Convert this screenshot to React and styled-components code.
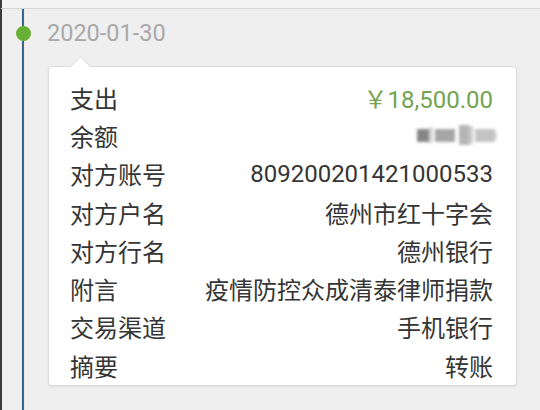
import React from "react";
import styled, { createGlobalStyle } from "styled-components";

const Global = createGlobalStyle`
  html, body { margin: 0; padding: 0; background: #efefef; }
  body { font-family: "Roboto", "Noto Sans CJK SC", sans-serif; }
`;

const Page = styled.div`
  width: 540px;
  height: 410px;
  display: flex;
  flex-direction: column;
  background: #efefef;
  overflow: hidden;
`;

const TopBand = styled.div`
  height: 8px;
  background: #f3f3f3;
  border-bottom: 1px solid #d6d6d6;
  border-left: 2px solid #3b3b3b;
`;

const Main = styled.div`
  flex: 1;
  display: flex;
`;

const Edge = styled.div`
  width: 2px;
  background: #3b3b3b;
`;

const Rail = styled.div`
  position: relative;
  width: 45px;
  display: flex;
`;

const Line = styled.div`
  width: 2px;
  margin-left: 20px;
  background: #3d6687;
  box-shadow: 0 0 1px #8fb0c8;
`;

const Dot = styled.div`
  position: absolute;
  left: 13.5px;
  top: 16.5px;
  width: 15px;
  height: 15px;
  border-radius: 50%;
  background: #66b133;
`;

const Content = styled.div`
  flex: 1;
  display: flex;
  flex-direction: column;
  padding-top: 7px;
`;

const DateText = styled.div`
  height: 34px;
  line-height: 34px;
  font-size: 23.5px;
  color: #a9a9a9;
  font-family: "Roboto", sans-serif;
`;

const Card = styled.div`
  position: relative;
  margin: 16px 23px 0 1px;
  background: #fff;
  border: 1px solid #dcdcdc;
  border-radius: 4px;
  box-shadow: 0 1px 2px rgba(0, 0, 0, 0.08);
  padding: 11px 23px 1px 21px;
  display: flex;
  flex-direction: column;

  &::before {
    content: "";
    position: absolute;
    left: 24px;
    top: -8px;
    width: 14px;
    height: 14px;
    background: #fff;
    border-left: 1px solid #dcdcdc;
    border-top: 1px solid #dcdcdc;
    transform: rotate(45deg);
  }
`;

const Row = styled.div`
  height: 38.3px;
  display: flex;
  align-items: center;
  justify-content: space-between;
  font-size: 24px;
  color: #353535;
  position: relative;
`;

const Label = styled.span`
  font-family: "Noto Sans CJK SC", sans-serif;
`;

const Value = styled.span`
  color: ${(p) => p.$color || "#353535"};
  font-family: "Roboto", "Noto Sans CJK SC", sans-serif;
`;

const Yen = styled.span`
  font-family: "Noto Sans CJK SC", sans-serif;
`;

const Blur = styled.div`
  display: flex;
  align-items: center;
  height: 22px;
  margin-right: -4px;
  filter: blur(1.8px);
`;

const Piece = styled.span`
  display: block;
  width: ${(p) => p.$w}px;
  height: ${(p) => p.$h}px;
  margin-left: ${(p) => p.$gap || 0}px;
  background: ${(p) => p.$c};
`;

const rows = [
  ["对方账号", "809200201421000533"],
  ["对方户名", "德州市红十字会"],
  ["对方行名", "德州银行"],
  ["附言", "疫情防控众成清泰律师捐款"],
  ["交易渠道", "手机银行"],
  ["摘要", "转账"],
];

export default function App() {
  return (
    <>
      <Global />
      <Page>
        <TopBand />
        <Main>
          <Edge />
          <Rail>
            <Line />
            <Dot />
          </Rail>
          <Content>
            <DateText>2020-01-30</DateText>
            <Card>
              <Row>
                <Label>支出</Label>
                <Value $color="#72a452">
                  <Yen>￥</Yen>18,500.00
                </Value>
              </Row>
              <Row>
                <Label>余额</Label>
                <Blur>
                  <Piece $w={12} $h={13} $c="#858585" />
                  <Piece $w={4} $h={16} $c="#d6d6d6" />
                  <Piece $w={20} $h={13} $c="#a6a6a6" $gap={2} />
                  <Piece $w={10} $h={20} $c="#b5b5b5" $gap={4} />
                  <Piece $w={4} $h={18} $c="#cdcdcd" />
                  <Piece $w={20} $h={13} $c="#c3c3c3" $gap={2} />
                  <Piece $w={2} $h={8} $c="#dedede" />
                </Blur>
              </Row>
              {rows.map(([k, v]) => (
                <Row key={k}>
                  <Label>{k}</Label>
                  <Value>{v}</Value>
                </Row>
              ))}
            </Card>
          </Content>
        </Main>
      </Page>
    </>
  );
}
